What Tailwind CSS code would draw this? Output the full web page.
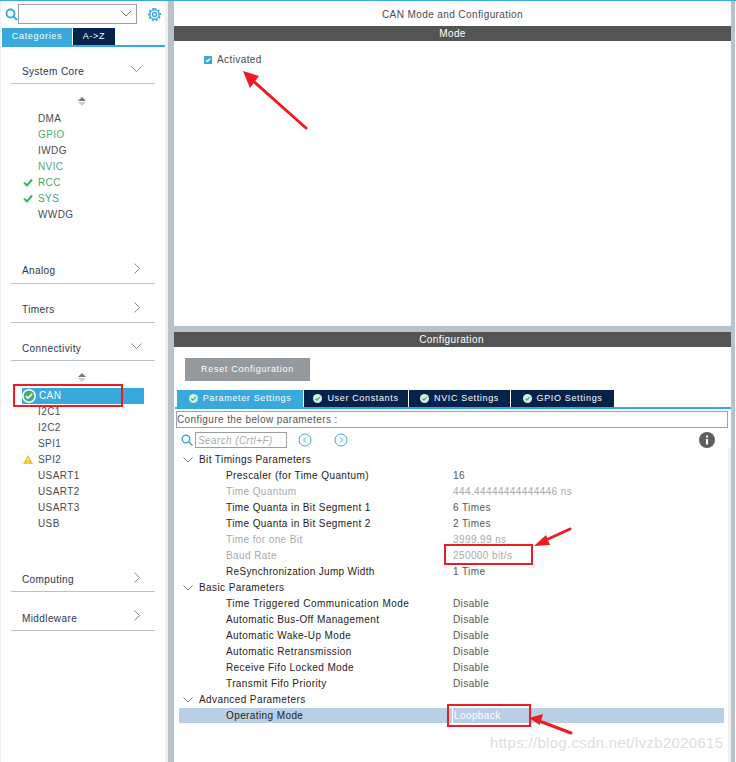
<!DOCTYPE html>
<html lang="en">
<head>
<meta charset="UTF-8">
<title>CAN Mode and Configuration</title>
<script src="https://cdn.jsdelivr.net/npm/@tailwindcss/browser@4"></script>
</head>
<body class="bg-white">
<div class="relative w-[736px] h-[762px] overflow-hidden flex font-['Liberation_Sans',sans-serif] text-[10px] tracking-[0.4px] text-[#4a4a52] border-t border-[#39a9dc]">

  <!-- left panel -->
  <aside class="w-[168px] h-full shrink-0 border-l border-[#eef0f2] border-r-[3px] border-r-[#eef0f2] flex flex-col">
    <div class="h-[26px] flex items-center">
      <svg class="w-[13px] h-[13px] ml-[4px]" viewBox="0 0 13 13" fill="none" stroke="#39a9dc" stroke-width="1.8"><circle cx="5.5" cy="5.5" r="4"/><path d="M8.5 8.5l3.5 3.5"/></svg>
      <div class="w-[119px] h-[20px] border border-[#9a9ea2] flex items-center justify-end pr-[5px]">
        <svg class="w-[10px] h-[6px]" viewBox="0 0 10 6" fill="none" stroke="#777" stroke-width="1"><path d="M0 0l5 5 5-5"/></svg>
      </div>
      <svg class="w-[13px] h-[13px] ml-[11px]" viewBox="0 0 14 14" fill="none" stroke="#39a9dc" stroke-width="1.5"><circle cx="7" cy="7" r="2.2"/><circle cx="7" cy="7" r="5"/><path stroke-dasharray="2 2" stroke-width="2" d="M7 .8a6.2 6.2 0 1 1-.01 0"/></svg>
    </div>
    <div class="ml-[1px] flex h-[17px] mt-[1px] text-[9px] tracking-[0.7px]">
      <div class="w-[70px] bg-[#39a9dc] text-white flex items-center justify-center">Categories</div>
      <div class="w-[42px] ml-px bg-[#03234b] text-white flex items-center justify-center">A-&gt;Z</div>
    </div>
    <div class="ml-[1px] h-[2px] bg-[#39a9dc]"></div>

    <div class="mx-[10px] mt-[18px] h-[19px] border-b border-[#b8c2ca] pl-[11px] flex justify-between items-start pr-[13px] text-[#2a3550]">
      <span class="leading-[14px]">System Core</span>
      <svg class="w-[11px] h-[7px] mt-[1px]" viewBox="0 0 11 7" fill="none" stroke="#888" stroke-width="1"><path d="M.5.5l5 5 5-5"/></svg>
    </div>
    <div class="h-[27px] pt-[13px] pr-[2px] flex flex-col items-center">
      <div class="w-0 h-0 border-x-[4px] border-x-transparent border-b-[4px] border-b-[#777]"></div>
      <div class="w-0 h-0 mt-px border-x-[4px] border-x-transparent border-t-[4px] border-t-[#ccc]"></div>
    </div>
    <ul class="leading-[16px] pl-[37px]">
      <li class="h-[16px]">DMA</li>
      <li class="h-[16px] text-[#4fa973]">GPIO</li>
      <li class="h-[16px]">IWDG</li>
      <li class="h-[16px] text-[#4fa973]">NVIC</li>
      <li class="h-[16px] text-[#3fa66b] relative"><svg class="absolute left-[-15px] top-[3px] w-[10px] h-[9px]" viewBox="0 0 10 9" fill="none" stroke="#3fae6f" stroke-width="2"><path d="M1 4.5l3 3 5-6"/></svg>RCC</li>
      <li class="h-[16px] text-[#3fa66b] relative"><svg class="absolute left-[-15px] top-[3px] w-[10px] h-[9px]" viewBox="0 0 10 9" fill="none" stroke="#3fae6f" stroke-width="2"><path d="M1 4.5l3 3 5-6"/></svg>SYS</li>
      <li class="h-[16px]">WWDG</li>
    </ul>

    <div class="mx-[10px] mt-[41px] h-[20px] border-b border-[#b8c2ca] pl-[11px] flex justify-between items-start pr-[14px] text-[#2a3550]">
      <span class="leading-[14px]">Analog</span>
      <svg class="w-[7px] h-[11px] -mt-[1px]" viewBox="0 0 7 11" fill="none" stroke="#888" stroke-width="1"><path d="M.5.5l5 5-5 5"/></svg>
    </div>
    <div class="mx-[10px] mt-[19px] h-[20px] border-b border-[#b8c2ca] pl-[11px] flex justify-between items-start pr-[14px] text-[#2a3550]">
      <span class="leading-[14px]">Timers</span>
      <svg class="w-[7px] h-[11px] -mt-[1px]" viewBox="0 0 7 11" fill="none" stroke="#888" stroke-width="1"><path d="M.5.5l5 5-5 5"/></svg>
    </div>
    <div class="mx-[10px] mt-[19px] h-[19px] border-b border-[#b8c2ca] pl-[11px] flex justify-between items-start pr-[13px] text-[#2a3550]">
      <span class="leading-[14px]">Connectivity</span>
      <svg class="w-[11px] h-[7px] mt-[1px]" viewBox="0 0 11 7" fill="none" stroke="#888" stroke-width="1"><path d="M.5.5l5 5 5-5"/></svg>
    </div>
    <div class="h-[27px] pt-[12px] pr-[2px] flex flex-col items-center">
      <div class="w-0 h-0 border-x-[4px] border-x-transparent border-b-[4px] border-b-[#777]"></div>
      <div class="w-0 h-0 mt-px border-x-[4px] border-x-transparent border-t-[4px] border-t-[#ccc]"></div>
    </div>
    <div class="ml-[21px] w-[122px] h-[16px] bg-[#39a9dc] text-white flex items-center leading-[14px] pb-px">
      <svg class="w-[14px] h-[14px] mr-[3px]" viewBox="0 0 13 13"><circle cx="6.5" cy="6.5" r="6.5" fill="#fff"/><circle cx="6.5" cy="6.5" r="5" fill="#3fae6f"/><path d="M3.5 6.5l2 2 4-4" fill="none" stroke="#fff" stroke-width="1.6"/></svg>
      CAN
    </div>
    <ul class="leading-[16px] pl-[37px]">
      <li class="h-[16px]">I2C1</li>
      <li class="h-[16px]">I2C2</li>
      <li class="h-[16px]">SPI1</li>
      <li class="h-[16px] relative"><svg class="absolute left-[-15px] top-[3px] w-[10px] h-[9px]" viewBox="0 0 10 9"><path d="M5 0l5 9H0z" fill="#f5c518"/><path d="M5 3v3M5 7v1" stroke="#fff" stroke-width="1"/></svg>SPI2</li>
      <li class="h-[16px]">USART1</li>
      <li class="h-[16px]">USART2</li>
      <li class="h-[16px]">USART3</li>
      <li class="h-[16px]">USB</li>
    </ul>

    <div class="mx-[10px] mt-[41px] h-[19px] border-b border-[#b8c2ca] pl-[11px] flex justify-between items-start pr-[14px] text-[#2a3550]">
      <span class="leading-[14px]">Computing</span>
      <svg class="w-[7px] h-[11px] -mt-[1px]" viewBox="0 0 7 11" fill="none" stroke="#888" stroke-width="1"><path d="M.5.5l5 5-5 5"/></svg>
    </div>
    <div class="mx-[10px] mt-[18px] h-[21px] border-b border-[#b8c2ca] pl-[11px] flex justify-between items-start pr-[14px] text-[#2a3550]">
      <span class="leading-[14px] mt-[2px]">Middleware</span>
      <svg class="w-[7px] h-[11px]" viewBox="0 0 7 11" fill="none" stroke="#888" stroke-width="1"><path d="M.5.5l5 5-5 5"/></svg>
    </div>
  </aside>

  <!-- main panel -->
  <main class="w-[567px] h-full bg-[#b8c2ca] flex flex-col pl-[6px] pr-[4px]">
    <section class="h-[325px] bg-white shrink-0">
      <div class="h-[25px] flex items-center justify-center pt-[1px]">CAN Mode and Configuration</div>
      <div class="h-[15px] bg-[#535554] text-white flex items-center justify-center">Mode</div>
      <div class="mt-[11px] ml-[30px] flex items-center">
        <div class="w-[8px] h-[8px] mt-[1px] bg-[#39a9dc] flex items-center justify-center">
          <svg class="w-[6px] h-[6px]" viewBox="0 0 6 6" fill="none" stroke="#fff" stroke-width="1.2"><path d="M1 3l1.5 1.5L5 1.5"/></svg>
        </div>
        <span class="ml-[5px]">Activated</span>
      </div>
    </section>

    <section class="mt-[6px] flex-1 bg-white flex flex-col">
      <div class="h-[15px] bg-[#535554] text-white flex items-center justify-center pr-[2px]">Configuration</div>
      <div class="ml-[11px] mt-[11px] w-[125px] h-[23px] bg-[#94999e] text-white flex items-center justify-center text-[9px] tracking-[0.7px]">Reset Configuration</div>
      <div class="ml-[3px] mt-[9px] flex h-[17px] gap-px text-white text-[9px] tracking-[0.65px]">
        <div class="w-[126px] bg-[#39a9dc] flex items-center justify-center gap-[5px]"><svg class="w-[9px] h-[9px]" viewBox="0 0 9 9"><circle cx="4.5" cy="4.5" r="4.5" fill="#d8f0e2"/><path d="M2.4 4.6l1.5 1.5 2.8-3" fill="none" stroke="#3fae6f" stroke-width="1.3"/></svg>Parameter Settings</div>
        <div class="w-[104px] bg-[#03234b] flex items-center justify-center gap-[5px]"><svg class="w-[9px] h-[9px]" viewBox="0 0 9 9"><circle cx="4.5" cy="4.5" r="4.5" fill="#d8f0e2"/><path d="M2.4 4.6l1.5 1.5 2.8-3" fill="none" stroke="#3fae6f" stroke-width="1.3"/></svg>User Constants</div>
        <div class="w-[101px] bg-[#03234b] flex items-center justify-center gap-[5px]"><svg class="w-[9px] h-[9px]" viewBox="0 0 9 9"><circle cx="4.5" cy="4.5" r="4.5" fill="#d8f0e2"/><path d="M2.4 4.6l1.5 1.5 2.8-3" fill="none" stroke="#3fae6f" stroke-width="1.3"/></svg>NVIC Settings</div>
        <div class="w-[103px] bg-[#03234b] flex items-center justify-center gap-[5px]"><svg class="w-[9px] h-[9px]" viewBox="0 0 9 9"><circle cx="4.5" cy="4.5" r="4.5" fill="#d8f0e2"/><path d="M2.4 4.6l1.5 1.5 2.8-3" fill="none" stroke="#3fae6f" stroke-width="1.3"/></svg>GPIO Settings</div>
      </div>
      <div class="ml-[1px] h-[2px] bg-[#39a9dc]"></div>
      <div class="ml-[2px] mr-[3px] mt-[2px] h-[17px] border border-[#a0a4a8] flex items-center text-[#555]">Configure the below parameters :</div>
      <div class="h-[16px] mt-[4px] flex items-center relative">
        <svg class="w-[12px] h-[12px] ml-[7px]" viewBox="0 0 12 12" fill="none" stroke="#39a9dc" stroke-width="1.4"><circle cx="5" cy="5" r="3.8"/><path d="M8 8l3.5 3.5"/></svg>
        <div class="w-[92px] h-[16px] ml-[2px] border border-[#9a9ea2] italic text-[#aaa] flex items-center pl-[2px]">Search (Crtl+F)</div>
        <svg class="w-[14px] h-[14px] ml-[11px]" viewBox="0 0 14 14" fill="none" stroke="#39a9dc"><circle cx="7" cy="7" r="6"/><path d="M8 4.5L5.5 7 8 9.5"/></svg>
        <svg class="w-[14px] h-[14px] ml-[22px]" viewBox="0 0 14 14" fill="none" stroke="#39a9dc"><circle cx="7" cy="7" r="6"/><path d="M6 4.5L8.5 7 6 9.5"/></svg>
        <svg class="w-[16px] h-[16px] absolute left-[525px] top-0" viewBox="0 0 16 16"><circle cx="8" cy="8" r="8" fill="#5f5f5f"/><rect x="7" y="7" width="2" height="5.5" fill="#fff"/><rect x="7" y="3.5" width="2" height="2" fill="#fff"/></svg>
      </div>

      <div class="pt-[4px] leading-[16px] flex-1 border-r-[3px] border-[#eef0f2]">
        <div class="h-[16px] flex items-center pl-[9px] text-[#222]"><svg class="w-[10px] h-[6px] mr-[6px]" viewBox="0 0 10 6" fill="none" stroke="#777"><path d="M.5.5L5 5 9.5.5"/></svg>Bit Timings Parameters</div>
        <div class="h-[16px] grid grid-cols-[227px_1fr] pl-[52px] text-[#222]"><span>Prescaler (for Time Quantum)</span><span class="text-[#555]">16</span></div>
        <div class="h-[16px] grid grid-cols-[227px_1fr] pl-[52px] text-[#aaa]"><span>Time Quantum</span><span>444.44444444444446 ns</span></div>
        <div class="h-[16px] grid grid-cols-[227px_1fr] pl-[52px] text-[#222]"><span>Time Quanta in Bit Segment 1</span><span class="text-[#555]">6 Times</span></div>
        <div class="h-[16px] grid grid-cols-[227px_1fr] pl-[52px] text-[#222]"><span>Time Quanta in Bit Segment 2</span><span class="text-[#555]">2 Times</span></div>
        <div class="h-[16px] grid grid-cols-[227px_1fr] pl-[52px] text-[#aaa]"><span>Time for one Bit</span><span>3999.99 ns</span></div>
        <div class="h-[16px] grid grid-cols-[227px_1fr] pl-[52px] text-[#aaa]"><span>Baud Rate</span><span>250000 bit/s</span></div>
        <div class="h-[16px] grid grid-cols-[227px_1fr] pl-[52px] text-[#222]"><span class="tracking-[0.33px]">ReSynchronization Jump Width</span><span class="text-[#555]">1 Time</span></div>
        <div class="h-[16px] flex items-center pl-[9px] text-[#222]"><svg class="w-[10px] h-[6px] mr-[6px]" viewBox="0 0 10 6" fill="none" stroke="#777"><path d="M.5.5L5 5 9.5.5"/></svg>Basic Parameters</div>
        <div class="h-[16px] grid grid-cols-[227px_1fr] pl-[52px] text-[#222]"><span class="tracking-[0.5px]">Time Triggered Communication Mode</span><span class="text-[#555]">Disable</span></div>
        <div class="h-[16px] grid grid-cols-[227px_1fr] pl-[52px] text-[#222]"><span>Automatic Bus-Off Management</span><span class="text-[#555]">Disable</span></div>
        <div class="h-[16px] grid grid-cols-[227px_1fr] pl-[52px] text-[#222]"><span>Automatic Wake-Up Mode</span><span class="text-[#555]">Disable</span></div>
        <div class="h-[16px] grid grid-cols-[227px_1fr] pl-[52px] text-[#222]"><span>Automatic Retransmission</span><span class="text-[#555]">Disable</span></div>
        <div class="h-[16px] grid grid-cols-[227px_1fr] pl-[52px] text-[#222]"><span>Receive Fifo Locked Mode</span><span class="text-[#555]">Disable</span></div>
        <div class="h-[16px] grid grid-cols-[227px_1fr] pl-[52px] text-[#222]"><span>Transmit Fifo Priority</span><span class="text-[#555]">Disable</span></div>
        <div class="h-[16px] flex items-center pl-[9px] text-[#222]"><svg class="w-[10px] h-[6px] mr-[6px]" viewBox="0 0 10 6" fill="none" stroke="#777"><path d="M.5.5L5 5 9.5.5"/></svg>Advanced Parameters</div>
        <div class="h-[15px] ml-[5px] mr-[4px] bg-[#b8cfe6] grid grid-cols-[227px_1fr] pl-[47px] text-[#222] leading-[15px]"><span>Operating Mode</span><span class="text-white border-l border-white -ml-[1px] pl-[1px] w-[80px]">Loopback</span></div>
      </div>
    </section>
  </main>

  <!-- annotations drawn over the screenshot -->
  <div class="absolute left-[13px] top-[383px] w-[110px] h-[23px] border-2 border-[#ed1c24]"></div>
  <div class="absolute left-[444px] top-[543px] w-[89px] h-[21px] border-2 border-[#ed1c24]"></div>
  <div class="absolute left-[447px] top-[703px] w-[84px] h-[23px] border-2 border-[#ed1c24]"></div>
  <svg class="absolute left-0 top-0 w-[736px] h-[762px]" viewBox="0 0 736 762" fill="#ed1c24" stroke="none">
    <path d="M306 127L252 79" stroke="#ed1c24" stroke-width="3" stroke-linecap="round"/>
    <path d="M243 70l16 5-9 12z"/>
    <path d="M570 528L546 539" stroke="#ed1c24" stroke-width="3" stroke-linecap="round"/>
    <path d="M534 545l12-11 4 10z"/>
    <path d="M571 732L542 721" stroke="#ed1c24" stroke-width="3" stroke-linecap="round"/>
    <path d="M529 717l14-4 -3 11z"/>
  </svg>
  <div class="absolute left-[490px] top-[732px] text-[15px] leading-[20px] tracking-[0.3px] text-[#d4d4d4]/80">https://blog.csdn.net/lvzb2020615</div>
</div>
</body>
</html>
